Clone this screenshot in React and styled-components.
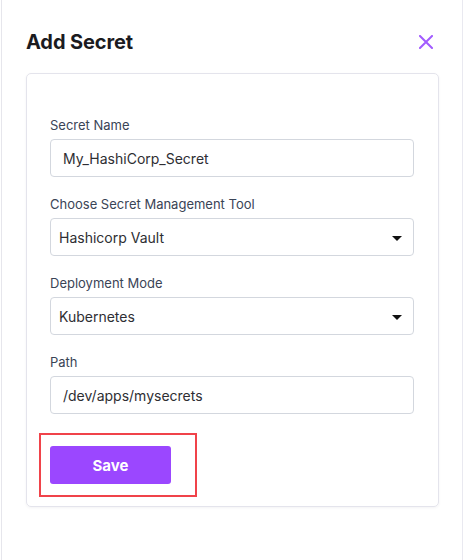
import styled, { createGlobalStyle } from 'styled-components';

const GlobalStyle = createGlobalStyle`
    html, body {
        margin: 0;
        padding: 0;
        background: #ffffff;
    }
    * {
        box-sizing: border-box;
    }
`;

const Panel = styled.div`
    margin: 0 1px;
    min-height: 560px;
    border-left: 1px solid #e6e6ec;
    border-right: 1px solid #e9e9f0;
    background: #ffffff;
    padding: 26px 23px 0 24px;
    font-family: Inter, "Noto Sans", sans-serif;
`;

const Header = styled.div`
    display: flex;
    align-items: center;
    justify-content: space-between;
    height: 32px;
    margin-bottom: 15px;
`;

const Title = styled.h2`
    margin: 0;
    font-size: 20px;
    font-weight: 700;
    color: #1b1b1f;
    letter-spacing: -0.1px;
`;

const CloseButton = styled.button`
    display: flex;
    padding: 0;
    margin-right: 6px;
    border: none;
    background: none;
    cursor: pointer;
`;

const Card = styled.div`
    border: 1px solid #e4e4ec;
    border-radius: 5px;
    box-shadow: 0 1px 3px rgba(20, 20, 60, 0.05);
    padding: 43px 24px 22px 23px;
`;

const Form = styled.form`
    display: flex;
    flex-direction: column;
    gap: 19px;
`;

const Field = styled.div`
    display: flex;
    flex-direction: column;
`;

const Label = styled.label`
    font-size: 13px;
    line-height: 16px;
    color: #3a4456;
    margin-bottom: 6px;
`;

const Input = styled.input`
    height: 38px;
    width: 100%;
    padding: 0 12px;
    border: 1px solid #d3d7de;
    border-radius: 4px;
    font-family: Inter, "Noto Sans", sans-serif;
    font-size: 14px;
    color: #2e2e33;
    background: #fff;
    outline: none;
`;

const SelectBox = styled.div`
    position: relative;
    height: 38px;
    display: flex;
    align-items: center;
    padding: 0 11px 0 8px;
    border: 1px solid #d3d7de;
    border-radius: 4px;
    font-size: 14px;
    color: #2e2e33;
    cursor: pointer;
`;

const SelectValue = styled.span`
    flex: 1;
`;

const Caret = styled.span`
    width: 0;
    height: 0;
    border-left: 5px solid transparent;
    border-right: 5px solid transparent;
    border-top: 5px solid #111;
    margin-top: 2px;
`;

const Actions = styled.div`
    margin-top: 13px;
    display: flex;
`;

const Highlight = styled.div`
    position: relative;

    &::after {
        content: '';
        position: absolute;
        top: -13px;
        left: -11px;
        right: -26px;
        bottom: -13px;
        border: 2px solid #f0434a;
        pointer-events: none;
    }
`;

const SaveButton = styled.button`
    width: 121px;
    height: 38px;
    border: none;
    border-radius: 3px;
    background: #9b47ff;
    color: #ffffff;
    font-family: Inter, "Noto Sans", sans-serif;
    font-size: 15px;
    font-weight: 700;
    cursor: pointer;
`;

const CloseIcon = () => (
    <svg width="14" height="14" viewBox="0 0 14 14">
        <path d="M1 1 L13 13 M13 1 L1 13" stroke="#a25cff" strokeWidth="2" strokeLinecap="square" fill="none" />
    </svg>
);

const Select = ({ value }) => (
    <SelectBox>
        <SelectValue>{value}</SelectValue>
        <Caret />
    </SelectBox>
);

const App = () => {
    return (
        <>
            <GlobalStyle />
            <Panel>
                <Header>
                    <Title>Add Secret</Title>
                    <CloseButton aria-label="Close">
                        <CloseIcon />
                    </CloseButton>
                </Header>
                <Card>
                    <Form onSubmit={(e) => e.preventDefault()}>
                        <Field>
                            <Label>Secret Name</Label>
                            <Input type="text" defaultValue="My_HashiCorp_Secret" />
                        </Field>
                        <Field>
                            <Label>Choose Secret Management Tool</Label>
                            <Select value="Hashicorp Vault" />
                        </Field>
                        <Field>
                            <Label>Deployment Mode</Label>
                            <Select value="Kubernetes" />
                        </Field>
                        <Field>
                            <Label>Path</Label>
                            <Input type="text" defaultValue="/dev/apps/mysecrets" />
                        </Field>
                        <Actions>
                            <Highlight>
                                <SaveButton type="submit">Save</SaveButton>
                            </Highlight>
                        </Actions>
                    </Form>
                </Card>
            </Panel>
        </>
    );
};

export default App;
